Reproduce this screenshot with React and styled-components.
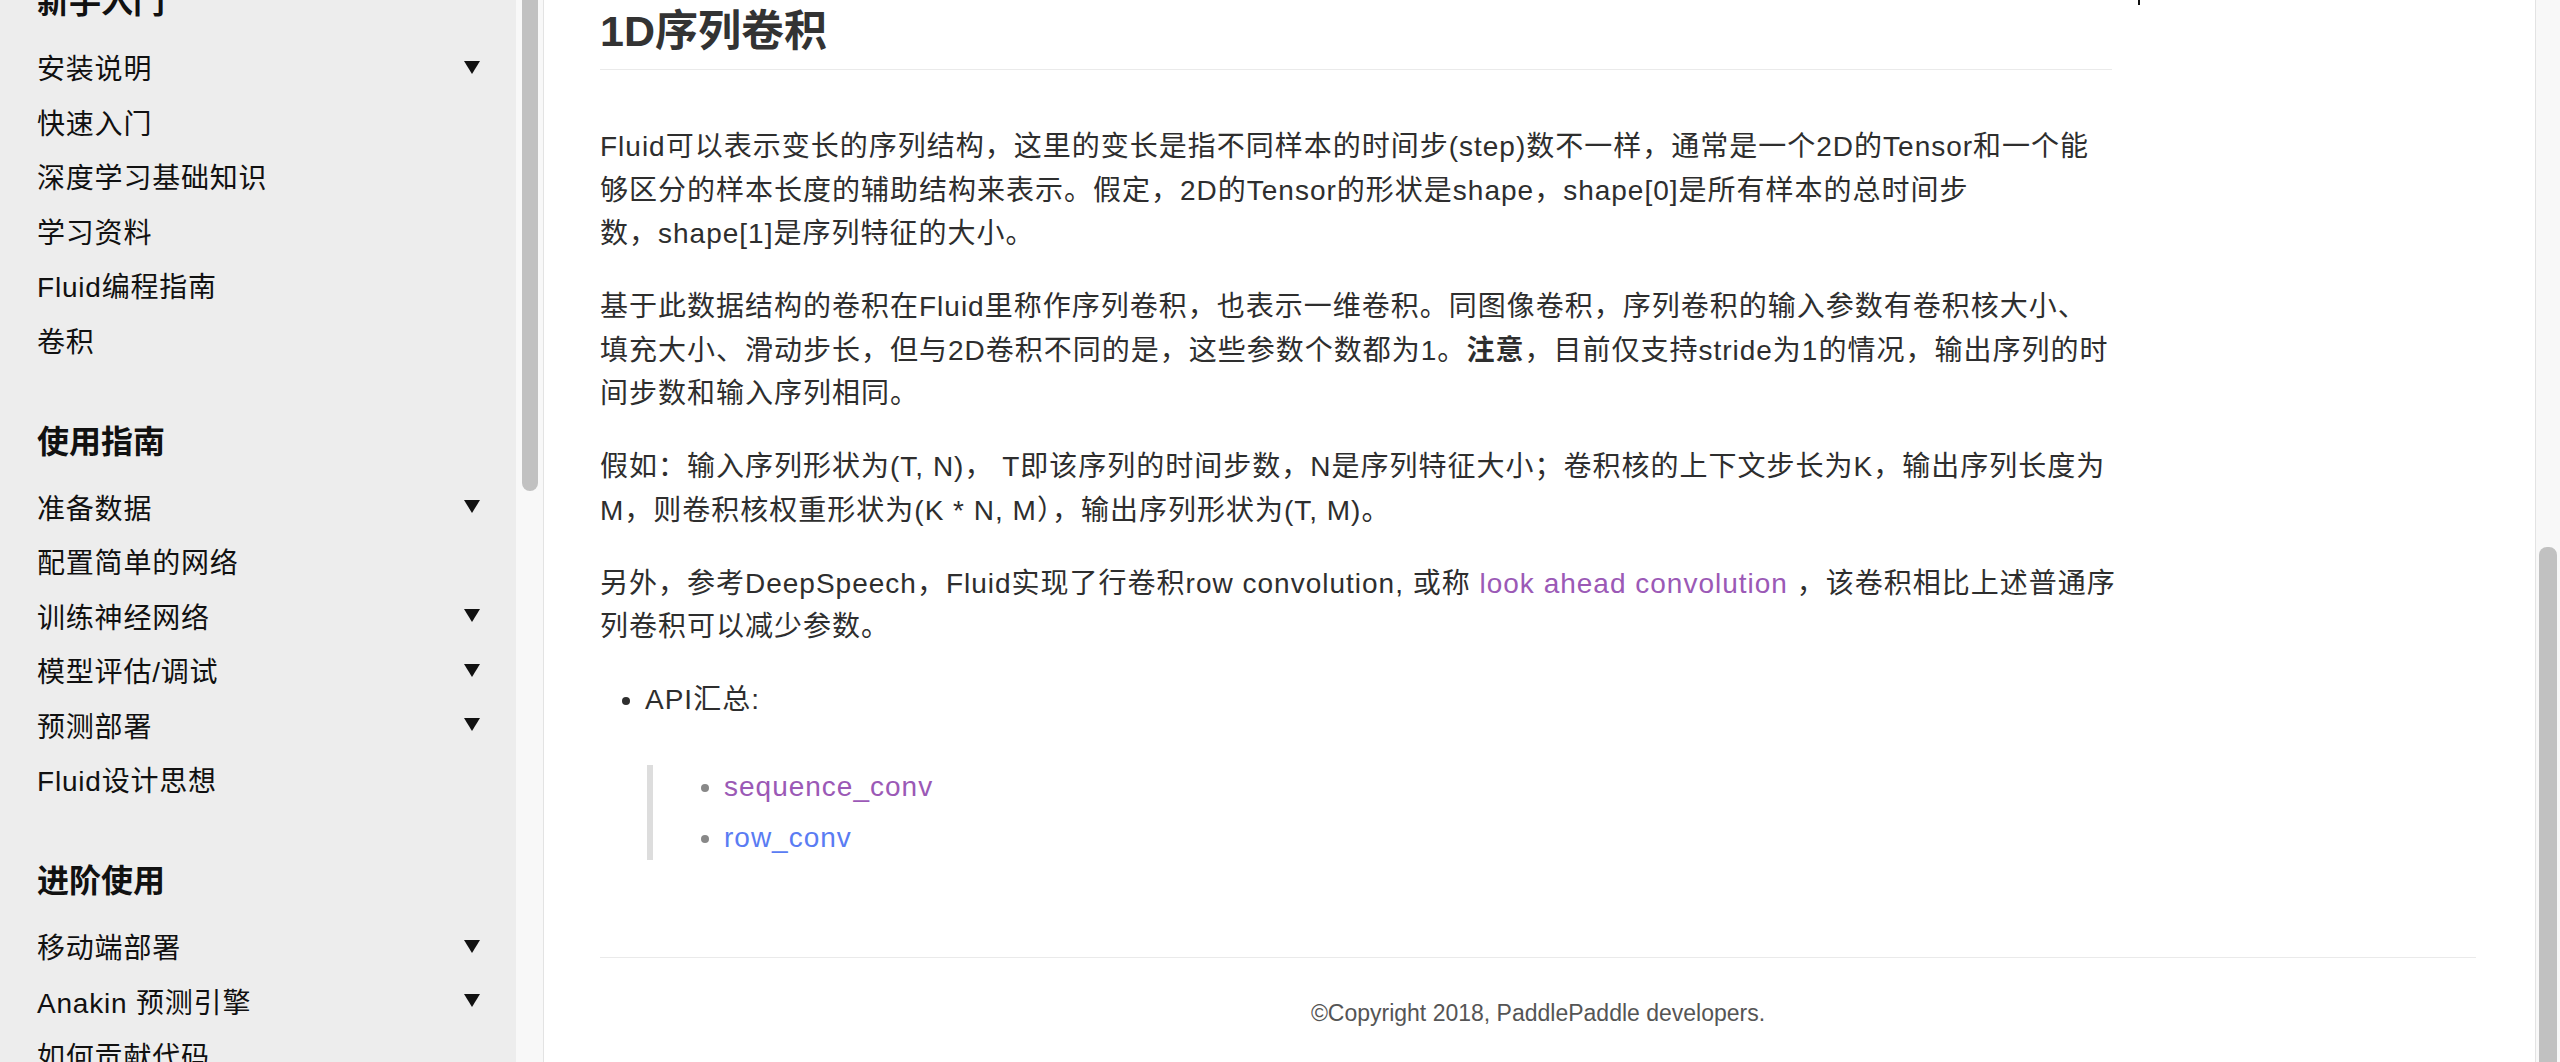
import React from "react";
import styled, { createGlobalStyle } from "styled-components";

const GlobalStyle = createGlobalStyle`
  html, body {
    margin: 0;
    padding: 0;
    height: 1062px;
    overflow: hidden;
    background: #fff;
  }
  body {
    font-family: "Liberation Sans", "Noto Sans CJK SC", sans-serif;
  }
`;

const Page = styled.div`
  display: flex;
  width: 2560px;
  height: 1062px;
  overflow: hidden;
`;

const Sidebar = styled.nav`
  width: 516px;
  flex: none;
  background: #ededed;
  overflow: hidden;
  padding: 0 36px 0 37px;
  box-sizing: border-box;
`;

const SectionTitle = styled.div`
  font-size: 32px;
  font-weight: 700;
  line-height: 44px;
  color: #111;
  margin: 52.75px 0 15.75px;
  &:first-child {
    margin-top: -20px;
  }
`;

const NavItem = styled.div`
  height: 54.5px;
  display: flex;
  align-items: center;
  justify-content: space-between;
  font-size: 28px;
  letter-spacing: 0.8px;
  color: #111;
  white-space: nowrap;
`;

const Caret = styled.span`
  width: 0;
  height: 0;
  border-left: 8px solid transparent;
  border-right: 8px solid transparent;
  border-top: 13px solid #111;
`;

const ScrollTrack = styled.div`
  width: ${(p) => p.$width}px;
  flex: none;
  background: #f8f8f8;
  border-${(p) => p.$side}: 1px solid #e3e3e3;
  box-sizing: border-box;
  display: flex;
  flex-direction: column;
  justify-content: ${(p) => (p.$bottom ? "flex-end" : "flex-start")};
  align-items: center;
`;

const Thumb = styled.div`
  width: ${(p) => p.$width}px;
  height: ${(p) => p.$height}px;
  background: #c1c1c1;
  border-radius: 8px;
  margin: ${(p) => (p.$bottom ? "0 0 -8px" : "-8px 0 0")};
`;

const Main = styled.main`
  flex: 1;
  position: relative;
  padding: 5px 59px 0 56px;
  box-sizing: border-box;
  color: #2e2e2e;
  font-size: 28px;
`;

const Caret2 = styled.span`
  position: absolute;
  left: 1594px;
  top: 0;
  width: 2px;
  height: 5px;
  background: #111;
`;

const Article = styled.article`
  width: 1512px;
`;

const Title = styled.h1`
  margin: 0 0 55px;
  font-size: 43px;
  line-height: 52px;
  font-weight: 700;
  color: #333;
  padding-bottom: 12px;
  border-bottom: 1px solid #eaeaea;
`;

const Para = styled.p`
  margin: 0 0 29.5px;
  line-height: 43.5px;
  letter-spacing: 1px;
  white-space: nowrap;
`;

const Link = styled.a`
  color: ${(p) => p.$color};
  text-decoration: none;
`;

const BulletList = styled.ul`
  margin: 0;
  padding-left: 45px;
  line-height: 43.5px;
  letter-spacing: 1px;
`;

const Quote = styled.blockquote`
  margin: 43.25px 0 0 2px;
  border-left: 6px solid #dddddd;
  padding: 0;
`;

const SubList = styled.ul`
  margin: 0;
  padding-left: 71px;
  list-style-type: disc;
  color: #888;
  line-height: 43.5px;
  li + li {
    margin-top: 8px;
  }
`;

const Footer = styled.footer`
  margin-top: 97px;
  border-top: 1px solid #eaeaea;
  padding-top: 40px;
  text-align: center;
  font-size: 23px;
  line-height: 30px;
  color: #555;
`;

const sections = [
  {
    title: "新手入门",
    items: [
      ["安装说明", true],
      ["快速入门", false],
      ["深度学习基础知识", false],
      ["学习资料", false],
      ["Fluid编程指南", false],
      ["卷积", false],
    ],
  },
  {
    title: "使用指南",
    items: [
      ["准备数据", true],
      ["配置简单的网络", false],
      ["训练神经网络", true],
      ["模型评估/调试", true],
      ["预测部署", true],
      ["Fluid设计思想", false],
    ],
  },
  {
    title: "进阶使用",
    items: [
      ["移动端部署", true],
      ["Anakin 预测引擎", true],
      ["如何贡献代码", false],
    ],
  },
];

export default function App() {
  return (
    <>
      <GlobalStyle />
      <Page>
        <Sidebar>
          {sections.map((s) => (
            <React.Fragment key={s.title}>
              <SectionTitle>{s.title}</SectionTitle>
              {s.items.map(([label, open]) => (
                <NavItem key={label}>
                  <span>{label}</span>
                  {open && <Caret />}
                </NavItem>
              ))}
            </React.Fragment>
          ))}
        </Sidebar>
        <ScrollTrack $width={28} $side="right">
          <Thumb $width={16} $height={499} />
        </ScrollTrack>
        <Main>
          <Caret2 />
          <Article>
            <Title>1D序列卷积</Title>
            <Para>
              Fluid可以表示变长的序列结构，这里的变长是指不同样本的时间步(step)数不一样，通常是一个2D的Tensor和一个能
              <br />
              够区分的样本长度的辅助结构来表示。假定，2D的Tensor的形状是shape，shape[0]是所有样本的总时间步
              <br />
              数，shape[1]是序列特征的大小。
            </Para>
            <Para>
              基于此数据结构的卷积在Fluid里称作序列卷积，也表示一维卷积。同图像卷积，序列卷积的输入参数有卷积核大小、
              <br />
              填充大小、滑动步长，但与2D卷积不同的是，这些参数个数都为1。<strong>注意</strong>，目前仅支持stride为1的情况，输出序列的时
              <br />
              间步数和输入序列相同。
            </Para>
            <Para>
              假如：输入序列形状为(T, N)， T即该序列的时间步数，N是序列特征大小；卷积核的上下文步长为K，输出序列长度为
              <br />
              M，则卷积核权重形状为(K * N, M），输出序列形状为(T, M)。
            </Para>
            <Para>
              另外，参考DeepSpeech，Fluid实现了行卷积row convolution, 或称{" "}
              <Link $color="#9b59b6" href="#">look ahead convolution</Link> ，该卷积相比上述普通序
              <br />
              列卷积可以减少参数。
            </Para>
            <BulletList>
              <li>
                API汇总:
                <Quote>
                  <SubList>
                    <li>
                      <Link $color="#9b59b6" href="#">sequence_conv</Link>
                    </li>
                    <li>
                      <Link $color="#5a7cf3" href="#">row_conv</Link>
                    </li>
                  </SubList>
                </Quote>
              </li>
            </BulletList>
          </Article>
          <Footer>©Copyright 2018, PaddlePaddle developers.</Footer>
        </Main>
        <ScrollTrack $width={25} $side="left" $bottom>
          <Thumb $width={18} $height={523} $bottom />
        </ScrollTrack>
      </Page>
    </>
  );
}
